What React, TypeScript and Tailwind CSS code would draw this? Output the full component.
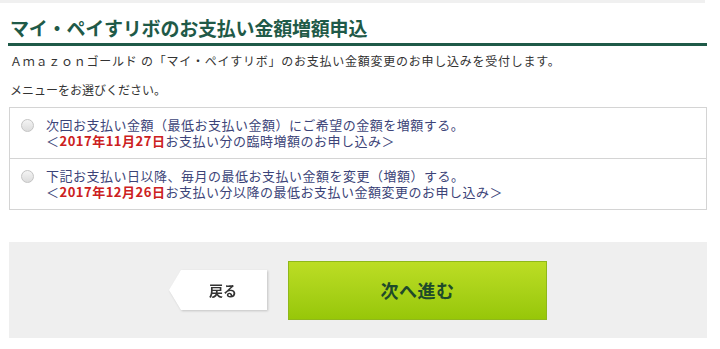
export default function App() {
  return (
    <div className="w-[720px] h-[349px] bg-white overflow-hidden font-['Noto_Sans_CJK_JP','Noto_Sans',sans-serif]">
      <div className="h-[3px] w-[705px] bg-[#f0f0f0]" />

      {/* heading */}
      <div className="ml-[8px] w-[699px] mt-[9px] border-b-[3px] border-[#1f5a48]">
        <h1 className="pl-[2px] text-[19px] leading-[31px] font-bold text-[#1f5a48] tracking-[-0.2px]">
          マイ・ペイすリボのお支払い金額増額申込
        </h1>
      </div>

      <div className="ml-[10px] text-[12px] leading-[18px] text-[#333]">
        <p className="mt-[6px] tracking-[0.75px]">Ａｍａｚｏｎゴールド の「マイ・ペイすリボ」のお支払い金額変更のお申し込みを受付します。</p>
        <p className="mt-[11px]">メニューをお選びください。</p>
      </div>

      {/* options */}
      <div className="ml-[9px] w-[698px] mt-[8px] border border-[#d4d4d4]">
        <Option
          line1="次回お支払い金額（最低お支払い金額）にご希望の金額を増額する。"
          date="2017年11月27日"
          rest="お支払い分の臨時増額のお申し込み＞"
        />
        <div className="border-t border-[#d4d4d4]" />
        <Option
          line1="下記お支払い日以降、毎月の最低お支払い金額を変更（増額）する。"
          date="2017年12月26日"
          rest="お支払い分以降の最低お支払い金額変更のお申し込み＞"
        />
      </div>

      {/* actions */}
      <div className="ml-[9px] w-[698px] mt-[32px] h-[96px] bg-[#efefef] flex items-center justify-center gap-[21px]">
        <div className="drop-shadow-[1px_1px_1px_rgba(0,0,0,0.18)]">
          <button className="w-[98px] h-[40px] bg-white flex items-center justify-center pl-[10px] text-[14px] font-bold text-[#333] [clip-path:polygon(12px_0,100%_0,100%_100%,12px_100%,0_50%)]">
            戻る
          </button>
        </div>
        <button className="w-[259px] h-[59px] border border-[#8fb81a] bg-gradient-to-b from-[#bcdd24] to-[#97c708] text-[18px] font-bold text-[#1e4a2a] tracking-[0.5px]">
          次へ進む
        </button>
      </div>
    </div>
  );
}

function Option({ line1, date, rest }: { line1: string; date: string; rest: string }) {
  return (
    <label className="flex items-start pl-[11px] pt-[9px] pb-[9px] text-[13px] leading-[16px] text-[#3c4478]">
      <span className="mt-[2px] w-[13px] h-[13px] rounded-full border border-[#c4c4c4] bg-gradient-to-b from-[#f4f4f4] to-[#dcdcdc] shrink-0" />
      <div className="ml-[12px] tracking-[0.5px]">
        <p>{line1}</p>
        <p>
          ＜<span className="font-bold text-[#cc2020]">{date}</span>
          {rest}
        </p>
      </div>
    </label>
  );
}
